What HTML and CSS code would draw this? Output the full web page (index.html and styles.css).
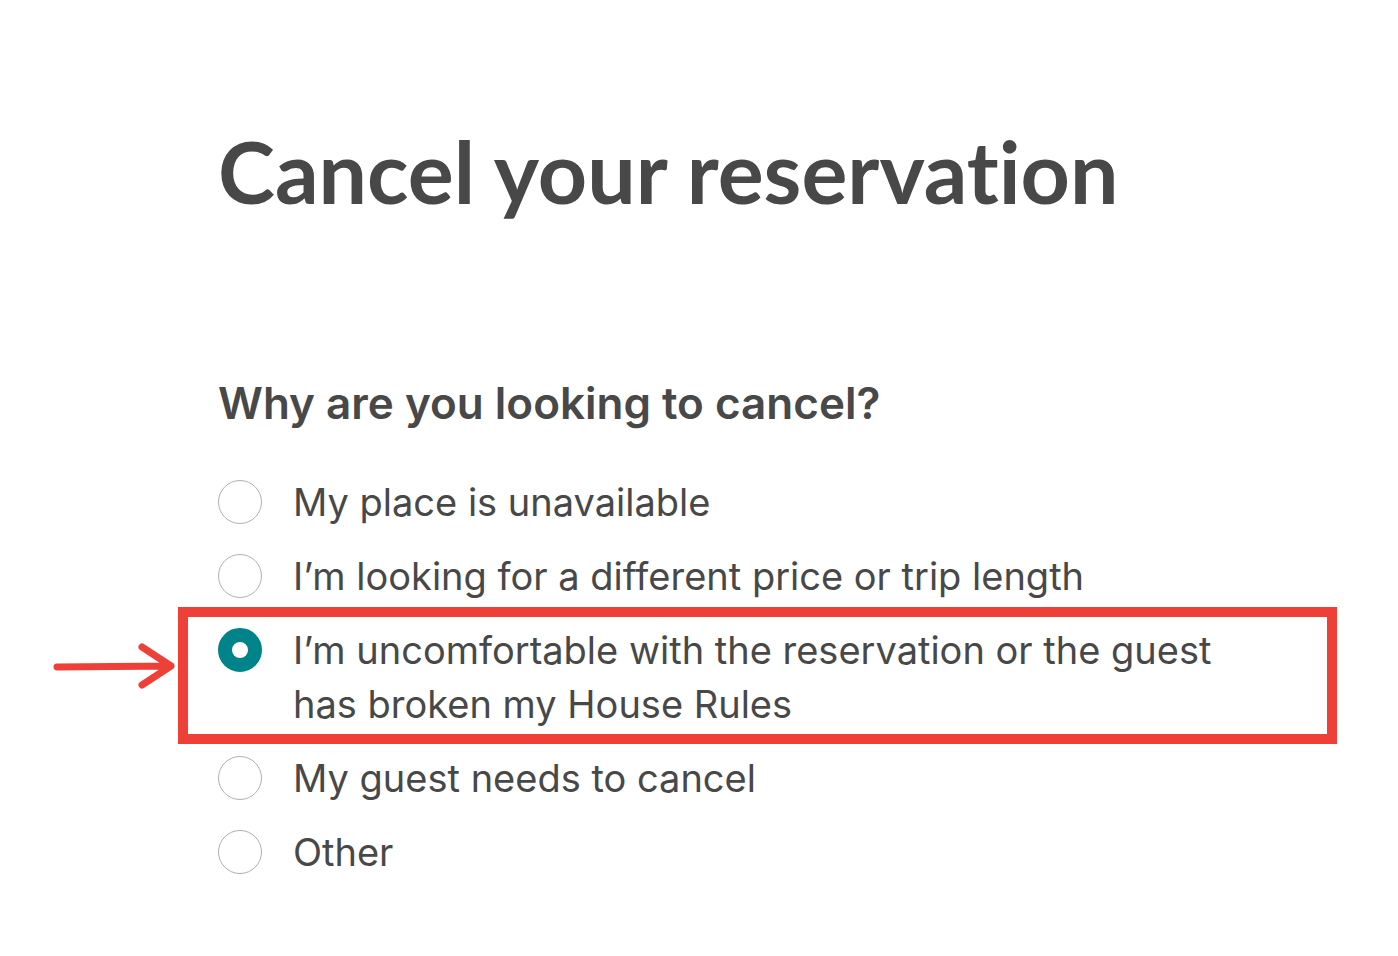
FILE: index.html
```html
<!DOCTYPE html>
<html lang="en">
<head>
    <meta charset="UTF-8">
    <meta name="viewport" content="width=device-width, initial-scale=1.0">
    <title>Cancel your reservation</title>
    <link rel="stylesheet" href="styles.css">
</head>
<body>
    <div class="cancel">
        <h1>Cancel your reservation</h1>

        <h2>Why are you looking to cancel?</h2>
        <ul class="reasons">
            <li class="reason">
                <span class="radio"></span>
                <span class="label">My place is unavailable</span>
            </li>
            <li class="reason">
                <span class="radio"></span>
                <span class="label">I&rsquo;m looking for a different price or trip length</span>
            </li>
            <li class="reason selected">
                <svg class="arrow" width="130" height="50" viewBox="0 0 130 50">
                    <path d="M4 24 L118 23 M89 4 L118 23 L89 42" fill="none" stroke="#ee4036" stroke-width="7" stroke-linecap="round" stroke-linejoin="round"/>
                </svg>
                <span class="radio"></span>
                <span class="label">I&rsquo;m uncomfortable with the reservation or the guest has broken my House Rules</span>
            </li>
            <li class="reason">
                <span class="radio"></span>
                <span class="label">My guest needs to cancel</span>
            </li>
            <li class="reason">
                <span class="radio"></span>
                <span class="label">Other</span>
            </li>
        </ul>
    </div>
</body>
</html>
```

FILE: styles.css
```css
body {
    font-family: Inter, "Open Sans", sans-serif;
    color: #484848;
    background: #ffffff;
    margin: 0;
}
.cancel {
    margin-left: 218px;
    padding-top: 118px;
    width: 1060px;
}
.cancel h1 {
    font-family: Lato, Inter, sans-serif;
    font-size: 86px;
    font-weight: 700;
    font-variant-ligatures: none;
    line-height: 106px;
    margin: 0;
}
.cancel h2 {
    font-size: 44px;
    font-weight: 600;
    line-height: 56px;
    margin: 151px 0 0;
}
.reasons {
    list-style: none;
    margin: 44px 0 0;
    padding: 0;
}
.reason {
    display: flex;
    align-items: flex-start;
    gap: 31px;
    margin-bottom: 20px;
    font-size: 38px;
    line-height: 54px;
    position: relative;
}
.radio {
    flex: none;
    box-sizing: border-box;
    width: 44px;
    height: 44px;
    margin-top: 5px;
    border: 1.5px solid #b0b0b0;
    border-radius: 50%;
    background: #ffffff;
}
.label {
    max-width: 960px;
}
.selected .radio {
    border: 14px solid #008489;
}
.selected::after {
    content: "";
    position: absolute;
    left: -40px;
    top: -16px;
    right: -59px;
    bottom: -13px;
    border: 10px solid #ee4036;
}
.arrow {
    position: absolute;
    left: -165px;
    top: 20px;
}
```
